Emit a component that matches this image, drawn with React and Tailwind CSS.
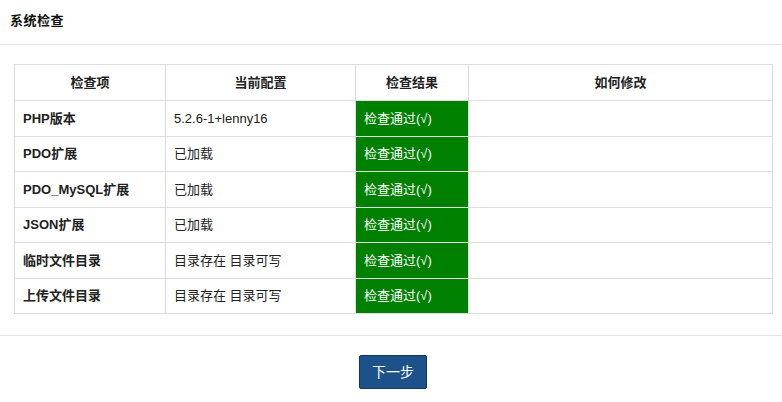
const rows = [
  { name: "PHP版本", value: "5.2.6-1+lenny16" },
  { name: "PDO扩展", value: "已加载" },
  { name: "PDO_MySQL扩展", value: "已加载" },
  { name: "JSON扩展", value: "已加载" },
  { name: "临时文件目录", value: "目录存在 目录可写" },
  { name: "上传文件目录", value: "目录存在 目录可写" },
];

const font = { fontFamily: '"Liberation Sans", Arial, "Noto Sans CJK SC", sans-serif' };

export default function App() {
  return (
    <div className="w-[782px] h-[402px] bg-white text-[#222] text-[13px]" style={font}>
      <div className="h-[45px] flex items-center pl-[10px] pb-[2px] border-b border-[#e5e5e5]">
        <h1 className="font-bold text-[13px] tracking-[0.5px] text-[#111]">系统检查</h1>
      </div>

      <div className="pt-[19px] px-[14px] pb-[21px]">
        <table className="w-[758px] border-collapse table-fixed">
          <colgroup>
            <col className="w-[151px]" />
            <col className="w-[190px]" />
            <col className="w-[113px]" />
            <col className="w-[304px]" />
          </colgroup>
          <thead>
            <tr className="h-[36px]">
              <th className="border border-[#ddd] font-bold text-center">检查项</th>
              <th className="border border-[#ddd] font-bold text-center">当前配置</th>
              <th className="border border-[#ddd] font-bold text-center">检查结果</th>
              <th className="border border-[#ddd] font-bold text-center">如何修改</th>
            </tr>
          </thead>
          <tbody>
            {rows.map((r) => (
              <tr key={r.name} className="h-[35.5px]">
                <td className="border border-[#ddd] px-[8px] font-bold">{r.name}</td>
                <td className="border border-[#ddd] px-[8px]">{r.value}</td>
                <td className="border border-[#ddd] px-[8px] bg-[#008000] text-white">检查通过(√)</td>
                <td className="border border-[#ddd] px-[8px]"></td>
              </tr>
            ))}
          </tbody>
        </table>
      </div>

      <div className="border-t border-[#e5e5e5] flex justify-center pt-[19px]">
        <button className="ml-[4px] w-[68px] h-[34px] bg-[#1d5189] border border-[#12375f] rounded-[2px] text-white text-[14px]">
          下一步
        </button>
      </div>
    </div>
  );
}
